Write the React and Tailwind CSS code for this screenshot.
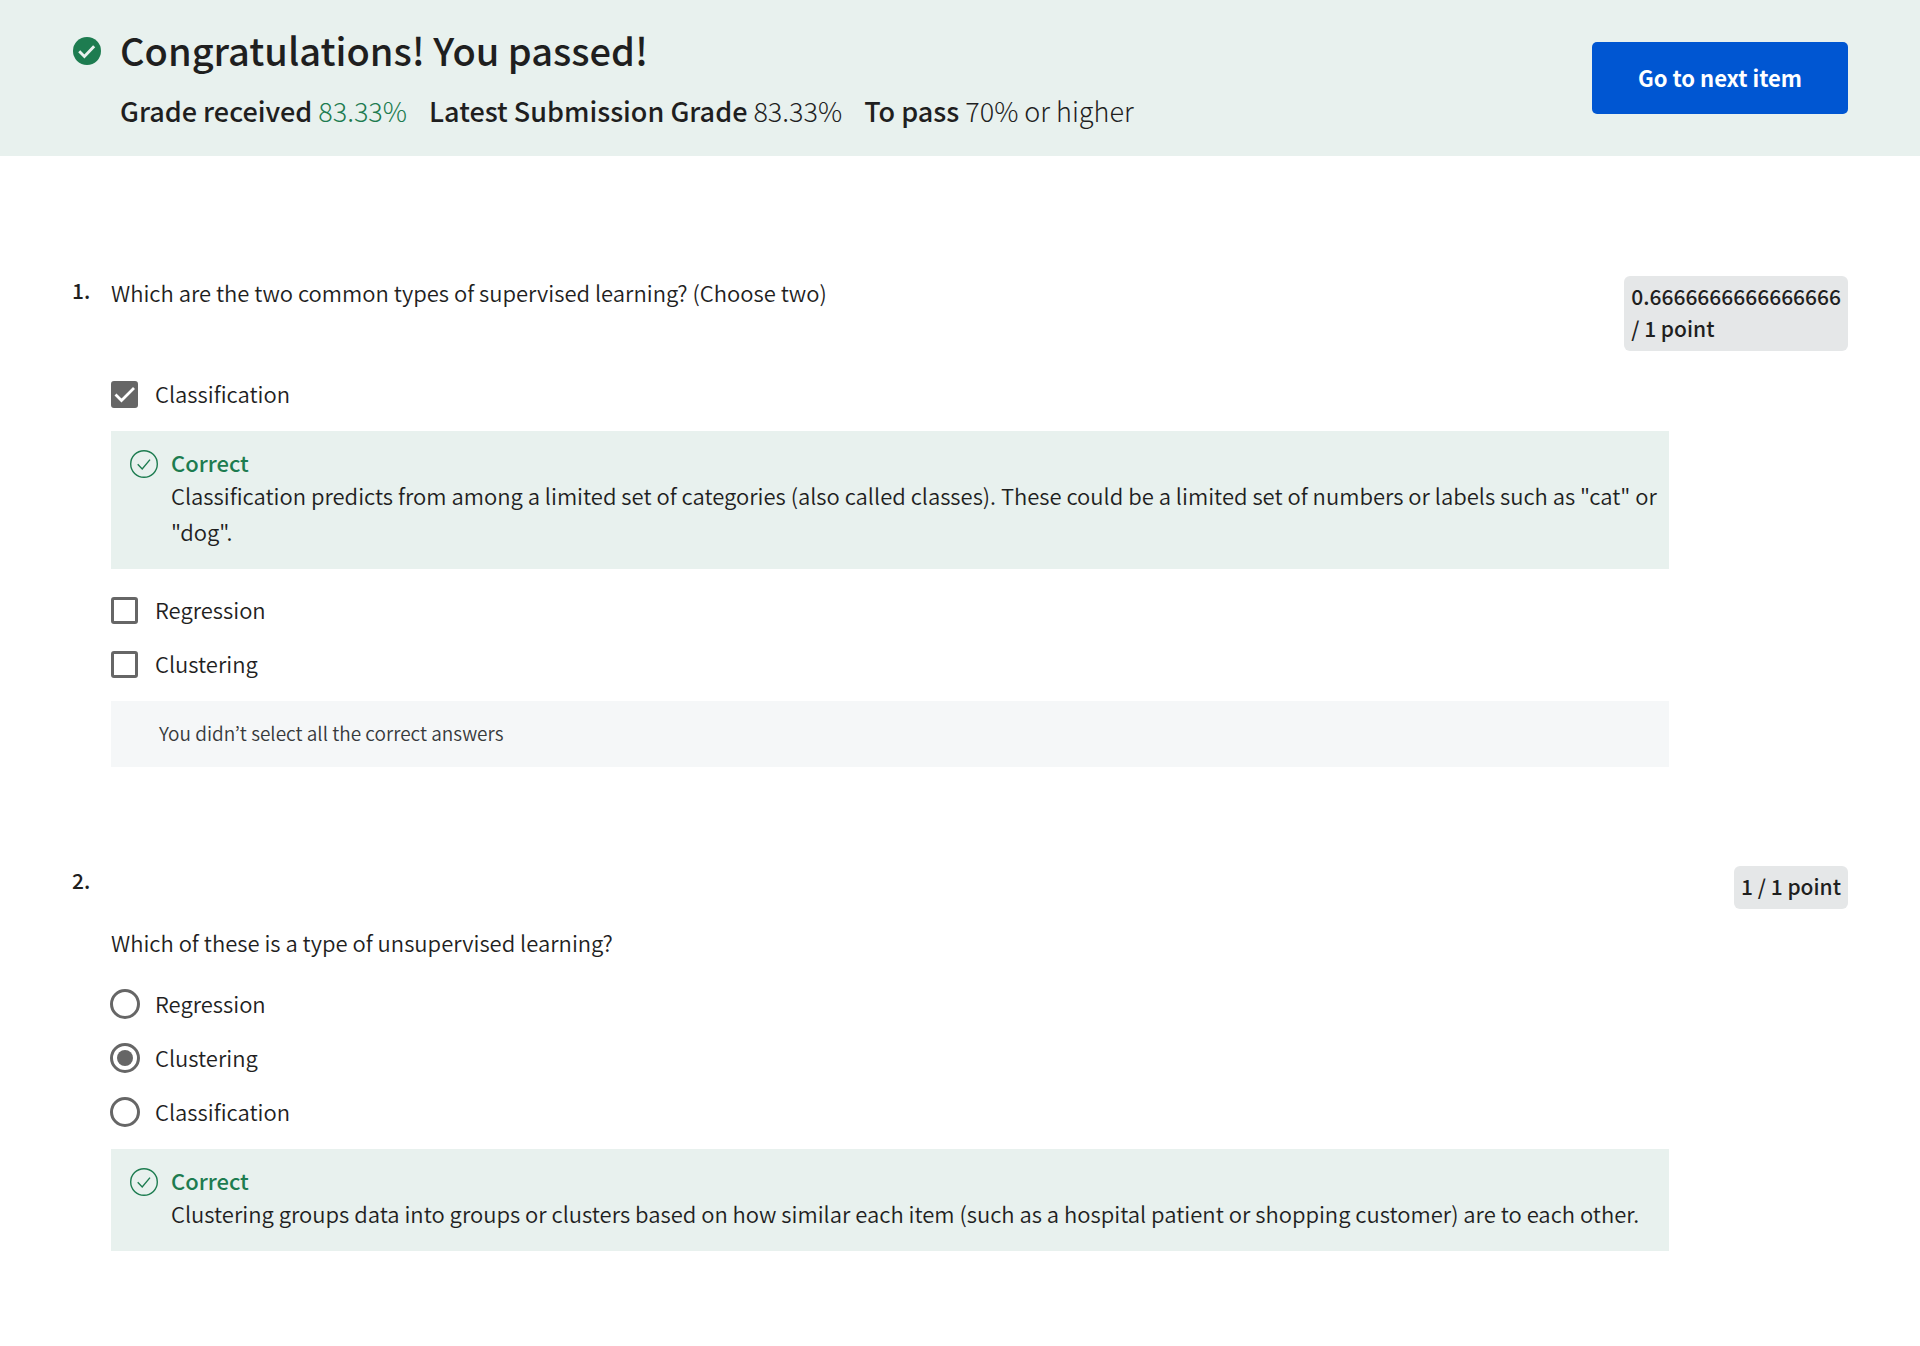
function CheckBadge() {
  return (
    <svg className="mt-[15px] size-7 shrink-0" viewBox="0 0 27 27" aria-hidden="true">
      <circle cx="13.5" cy="13.5" r="13.5" fill="#1d7c50" />
      <path d="M6 13.8l5 5L20.4 9" fill="none" stroke="#e8f1ee" strokeWidth="2.8" />
    </svg>
  );
}

function Grade({ label, value, className = "" }) {
  return (
    <p>
      <span className="font-medium">{label}</span> <span className={className}>{value}</span>
    </p>
  );
}

function Points({ children }) {
  return (
    <div className="w-min rounded-md bg-[#e5e7e8] px-[7px] pt-1 pb-[7px] text-[21px] leading-8 font-medium">
      {children}
    </div>
  );
}

function Option({ type, name, label, checked }) {
  const id = `${name}-${label.toLowerCase()}`;
  return (
    <div className="flex h-[54px] items-center pb-0.5">
      <span className="grid w-[27px] shrink-0 place-content-center place-items-center">
        {type === "checkbox" ? (
          <input
            id={id}
            type="checkbox"
            defaultChecked={checked}
            className="peer col-start-1 row-start-1 size-[27px] appearance-none rounded-[3px] border-3 border-[#666] bg-white checked:bg-[#666]"
          />
        ) : (
          <input
            id={id}
            type="radio"
            name={name}
            defaultChecked={checked}
            className="peer col-start-1 row-start-1 size-[30px] appearance-none rounded-full border-3 border-[#666] bg-white"
          />
        )}
        {type === "checkbox" ? (
          <svg className="pointer-events-none col-start-1 row-start-1 hidden size-[27px] peer-checked:block" viewBox="0 0 27 27" aria-hidden="true">
            <path d="M4.5 13.5l6 6L23 7" fill="none" stroke="#fff" strokeWidth="2.8" />
          </svg>
        ) : (
          <span className="pointer-events-none col-start-1 row-start-1 hidden size-4 rounded-full bg-[#666] peer-checked:block" />
        )}
      </span>
      <label htmlFor={id} className="pb-0.5 pl-[17px]">
        {label}
      </label>
    </div>
  );
}

function Correct({ children }) {
  return (
    <div className="mt-[9px] mb-[15px] flex bg-[#e8f1ee] pt-4 pr-2 pb-5 pl-[19px]">
      <svg className="mt-[3px] mr-[13px] size-7 shrink-0" viewBox="0 0 28 28" fill="none" stroke="#1d7c50" strokeWidth="1.4" aria-hidden="true">
        <circle cx="14" cy="14" r="13.3" />
        <path d="M7.7 14.3l4.5 4.6 7.8-9.3" />
      </svg>
      <div>
        <p className="leading-[30px] font-medium text-[#1d7c50]">Correct</p>
        <p className="leading-9">{children}</p>
      </div>
    </div>
  );
}

export default function App() {
  return (
    <div className="bg-white font-['Noto_Sans_CJK_KR',sans-serif] text-[22px] font-[350] text-[#1f1f1f]">
      <header className="flex items-center justify-between bg-[#e8f1ee] pr-[72px] pl-[73px]">
        <div className="flex gap-[19px] pt-[22px] pb-[27px]">
          <CheckBadge />
          <div>
            <h1 className="text-[38px] leading-[56px] font-medium">Congratulations! You passed!</h1>
            <div className="mt-[15px] flex flex-wrap gap-x-[22px] text-[27px] leading-9 font-light">
              <Grade label="Grade received" value="83.33%" className="text-[#1d7c50]" />
              <Grade label="Latest Submission Grade" value="83.33%" />
              <Grade label="To pass" value="70% or higher" />
            </div>
          </div>
        </div>
        <button type="button" className="h-[72px] w-64 shrink-0 rounded-[5px] bg-[#0056d2] pb-0.5 text-[22px] font-bold text-white">
          Go to next item
        </button>
      </header>

      <main className="px-[72px] pt-[120px] pb-[95px]">
        <section>
          <div className="flex items-start">
            <span className="w-[39px] shrink-0 text-[21px] leading-7 font-medium">1.</span>
            <h2 className="grow leading-8 font-[350]">Which are the two common types of supervised learning? (Choose two)</h2>
            <Points>0.6666666666666666 /&nbsp;1&nbsp;point</Points>
          </div>
          <div className="mt-[17px] mr-[179px] ml-[39px]">
            <Option type="checkbox" name="q1" label="Classification" checked />
            <Correct>
              Classification predicts from among a limited set of categories (also called classes). These could be a limited set of numbers or labels such as "cat" or "dog".
            </Correct>
            <Option type="checkbox" name="q1" label="Regression" />
            <Option type="checkbox" name="q1" label="Clustering" />
            <p className="mt-[9px] bg-[#f5f7f8] pt-4 pb-[18px] pl-12 text-[19px] leading-8 text-[#373a3c]">
              You didn’t select all the correct answers
            </p>
          </div>
        </section>

        <section className="mt-[99px]">
          <div className="flex items-start justify-between">
            <span className="w-[39px] shrink-0 text-[21px] leading-7 font-medium">2.</span>
            <Points>1&nbsp;/&nbsp;1&nbsp;point</Points>
          </div>
          <div className="mt-[15px] mr-[179px] ml-[39px]">
            <h2 className="mb-[18px] leading-9 font-[350]">Which of these is a type of unsupervised learning?</h2>
            <Option type="radio" name="q2" label="Regression" />
            <Option type="radio" name="q2" label="Clustering" checked />
            <Option type="radio" name="q2" label="Classification" />
            <Correct>
              Clustering groups data into groups or clusters based on how similar each item (such as a hospital patient or shopping customer) are to each other.
            </Correct>
          </div>
        </section>
      </main>
    </div>
  );
}
